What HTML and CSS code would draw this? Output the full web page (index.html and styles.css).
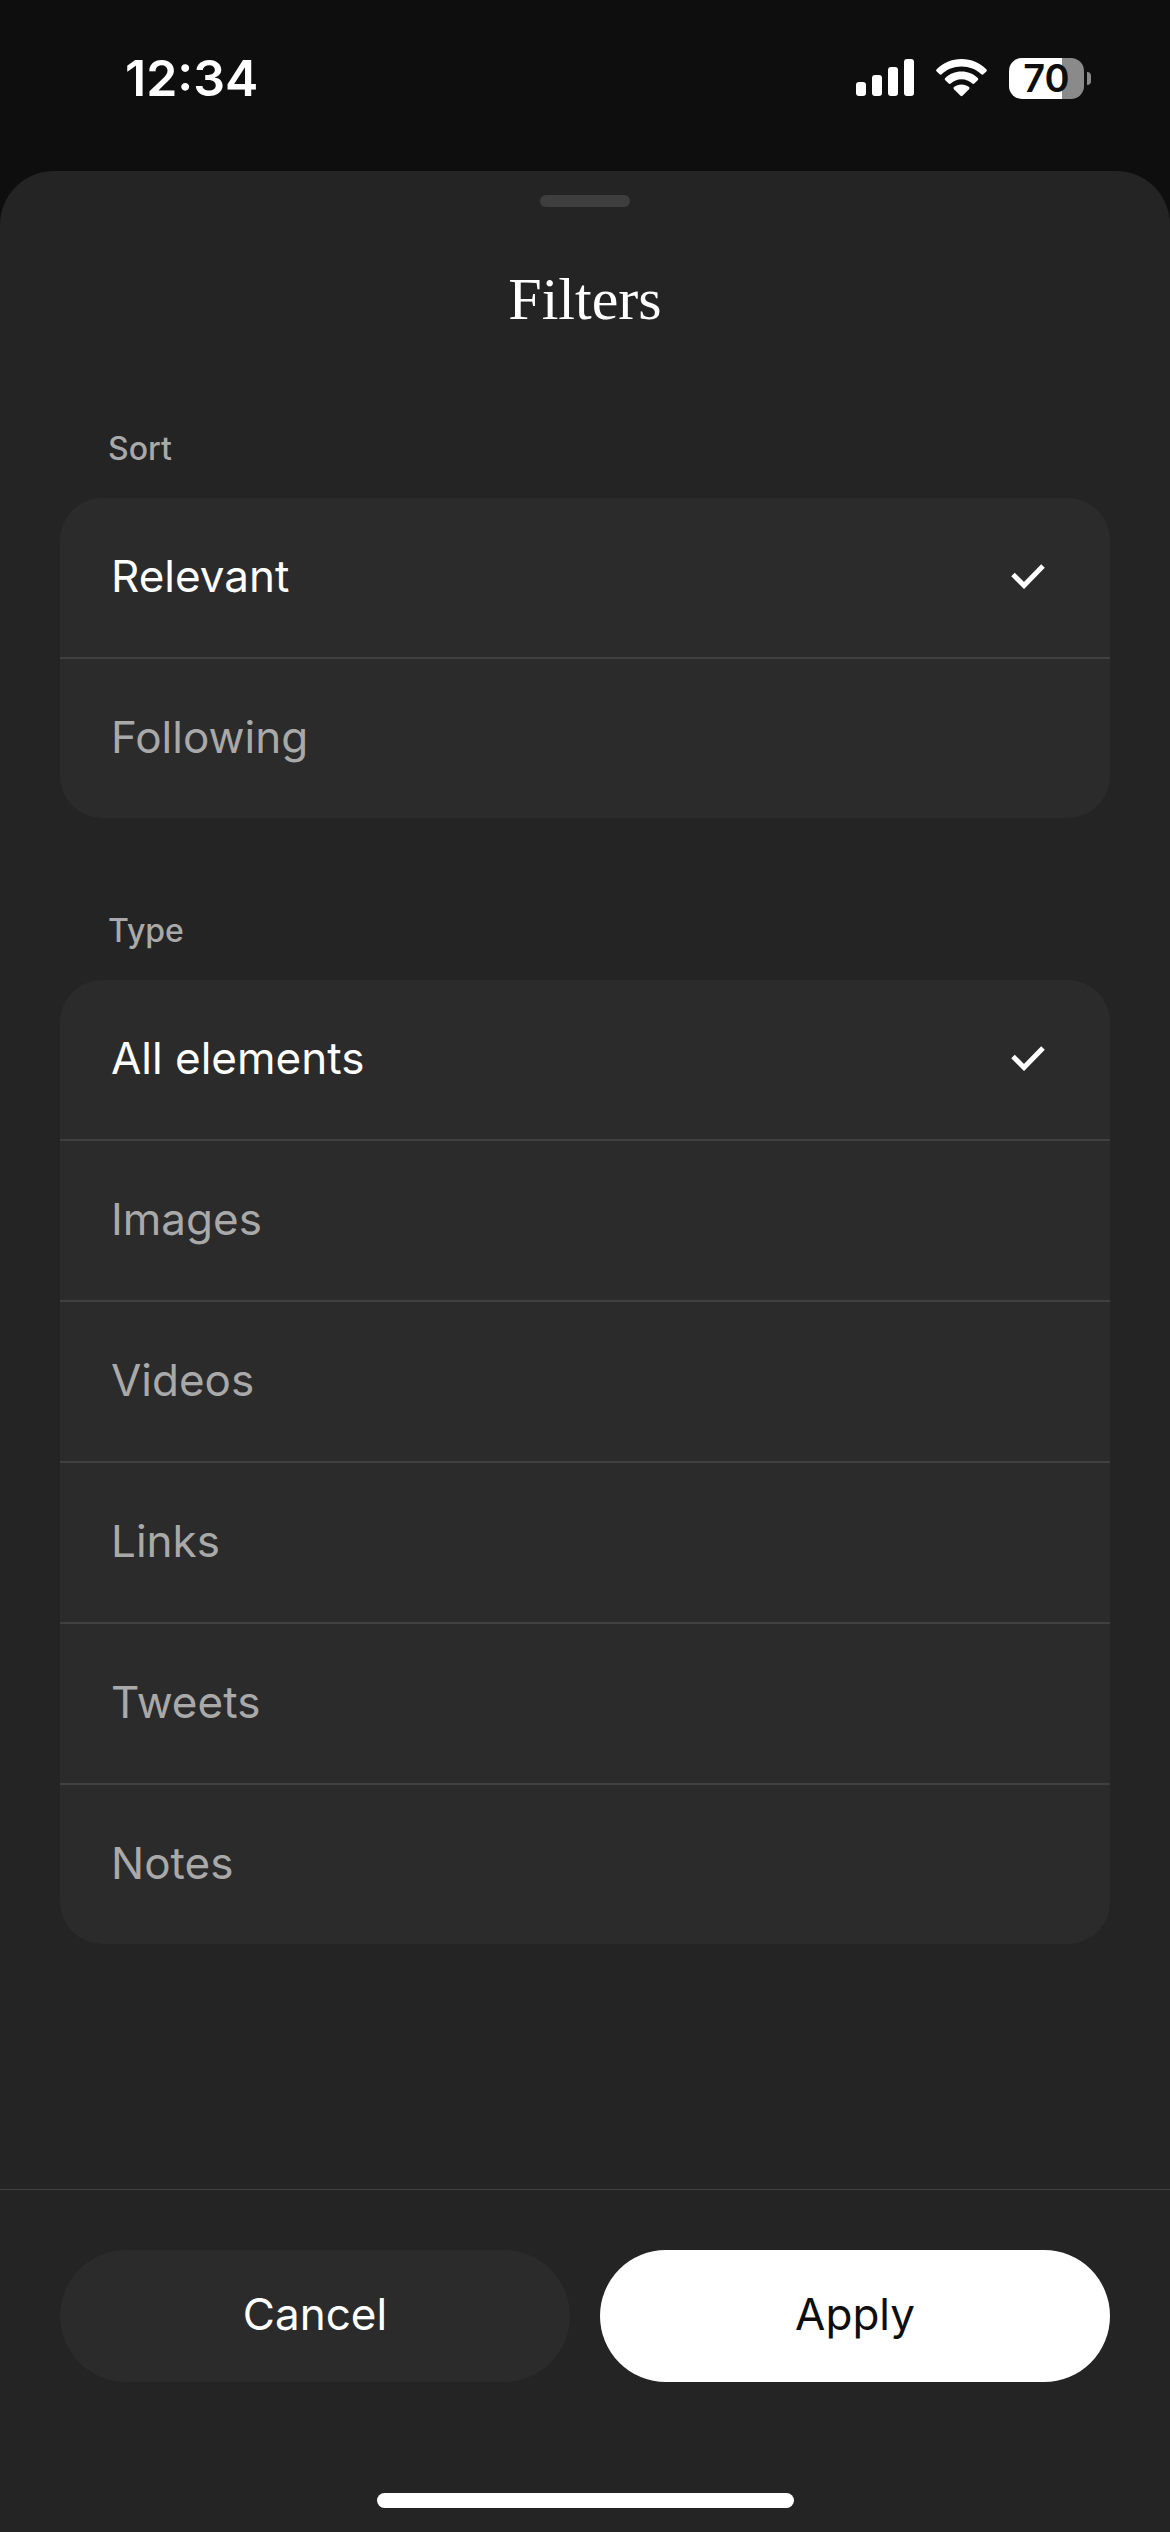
FILE: index.html
```
<!DOCTYPE html>
<html lang="en">
<head>
    <meta charset="UTF-8">
    <meta name="viewport" content="width=device-width, initial-scale=1.0">
    <title>Filters</title>
    <link rel="stylesheet" href="styles.css">
</head>
<body>
    <header class="status-bar">
        <time class="clock">12:34</time>
        <div class="status-icons">
            <svg class="signal" width="58" height="38" viewBox="0 0 58 38" fill="#fff">
                <rect x="0" y="23" width="10" height="14" rx="3"/>
                <rect x="16" y="16" width="10" height="21" rx="3"/>
                <rect x="32" y="8" width="10" height="29" rx="3"/>
                <rect x="48" y="0" width="10" height="37" rx="3"/>
            </svg>
            <svg class="wifi" width="51" height="38" viewBox="0 0 51 38" fill="#fff">
                <path d="M25.5 0C35.3 0 44 3.900 50.300 10.200c.7.700.7 1.500 0 2.200l-2.900 2.900c-.6.600-1.500.600-2.100 0C40.200 10.400 33.200 7.600 25.500 7.600S10.800 10.400 5.700 15.300c-.6.600-1.500.600-2.100 0L.7 12.400c-.7-.7-.7-1.500 0-2.200C7 3.900 15.700 0 25.500 0z"/>
                <path d="M25.500 12.600c6.300 0 12 2.400 16.200 6.400.7.700.7 1.500 0 2.200l-3.400 3.300c-.6.600-1.400.600-2.100 0-2.800-2.500-6.500-4.200-10.700-4.200s-7.900 1.700-10.700 4.200c-.7.600-1.500.600-2.100 0l-3.400-3.300c-.7-.7-.7-1.500 0-2.200 4.200-4 9.900-6.400 16.200-6.400z"/>
                <path d="M25.500 25.400c2.900 0 5.500 1 7.500 2.700.7.600.7 1.400 0 2.100l-6.500 6.500c-.6.600-1.400.600-2 0L18 30.200c-.7-.7-.7-1.500 0-2.100 2-1.700 4.600-2.700 7.500-2.700z"/>
            </svg>
            <div class="battery">
                <div class="battery-body">70</div>
                <div class="battery-cap"></div>
            </div>
        </div>
    </header>

    <main class="sheet">
        <div class="handle"></div>
        <h1 class="title">Filters</h1>

        <form class="filters" id="filters">
            <fieldset class="group">
                <legend class="group-label">Sort</legend>
                <div class="options">
                    <label class="option">
                        <input type="radio" name="sort" value="relevant" checked>
                        <span>Relevant</span>
                        <svg class="check" width="34" height="26" viewBox="0 0 34 26"><path d="M2 11.500l11 11L32 3"/></svg>
                    </label>
                    <label class="option">
                        <input type="radio" name="sort" value="following">
                        <span>Following</span>
                        <svg class="check" width="34" height="26" viewBox="0 0 34 26"><path d="M2 11.500l11 11L32 3"/></svg>
                    </label>
                </div>
            </fieldset>

            <fieldset class="group">
                <legend class="group-label">Type</legend>
                <div class="options">
                    <label class="option">
                        <input type="radio" name="type" value="all" checked>
                        <span>All elements</span>
                        <svg class="check" width="34" height="26" viewBox="0 0 34 26"><path d="M2 11.500l11 11L32 3"/></svg>
                    </label>
                    <label class="option">
                        <input type="radio" name="type" value="images">
                        <span>Images</span>
                        <svg class="check" width="34" height="26" viewBox="0 0 34 26"><path d="M2 11.500l11 11L32 3"/></svg>
                    </label>
                    <label class="option">
                        <input type="radio" name="type" value="videos">
                        <span>Videos</span>
                        <svg class="check" width="34" height="26" viewBox="0 0 34 26"><path d="M2 11.500l11 11L32 3"/></svg>
                    </label>
                    <label class="option">
                        <input type="radio" name="type" value="links">
                        <span>Links</span>
                        <svg class="check" width="34" height="26" viewBox="0 0 34 26"><path d="M2 11.500l11 11L32 3"/></svg>
                    </label>
                    <label class="option">
                        <input type="radio" name="type" value="tweets">
                        <span>Tweets</span>
                        <svg class="check" width="34" height="26" viewBox="0 0 34 26"><path d="M2 11.500l11 11L32 3"/></svg>
                    </label>
                    <label class="option">
                        <input type="radio" name="type" value="notes">
                        <span>Notes</span>
                        <svg class="check" width="34" height="26" viewBox="0 0 34 26"><path d="M2 11.500l11 11L32 3"/></svg>
                    </label>
                </div>
            </fieldset>
        </form>

        <footer class="footer">
            <div class="actions">
                <button class="btn" type="reset" form="filters">Cancel</button>
                <button class="btn btn-primary" type="submit" form="filters">Apply</button>
            </div>
            <div class="home-indicator"></div>
        </footer>
    </main>
</body>
</html>
```
FILE: styles.css
```
* {
    box-sizing: border-box;
}

body {
    margin: 0;
    min-height: 100vh;
    display: flex;
    flex-direction: column;
    background-color: #0e0e0e;
    color: #fff;
    font-family: Inter, "Liberation Sans", sans-serif;
}

/* Status bar */
.status-bar {
    display: flex;
    justify-content: space-between;
    align-items: center;
    padding: 48px 79px 63px 125px;
}

.clock {
    font-size: 50px;
    line-height: 60px;
    font-weight: 600;
}

.status-icons {
    display: flex;
    align-items: center;
    gap: 22px;
}

.battery {
    display: flex;
    align-items: center;
    gap: 3px;
}

.battery-body {
    width: 75px;
    border-radius: 13px;
    background: linear-gradient(to right, #fff 53px, #8a8a8a 53px);
    color: #0e0e0e;
    font-size: 38px;
    line-height: 41px;
    font-weight: 600;
    text-align: center;
}

.battery-cap {
    width: 4px;
    height: 13px;
    border-radius: 0 4px 4px 0;
    background-color: #8a8a8a;
}

/* Bottom sheet */
.sheet {
    flex: 1;
    display: flex;
    flex-direction: column;
    padding-top: 24px;
    border-radius: 54px 54px 0 0;
    background-color: #242424;
}

.handle {
    width: 90px;
    height: 12px;
    margin: 0 auto;
    border-radius: 6px;
    background-color: #3e3e3e;
}

.title {
    margin: 56px 0 94px;
    font-family: "Liberation Serif", serif;
    font-size: 60px;
    line-height: 72px;
    font-weight: 400;
    text-align: center;
}

.filters {
    display: flex;
    flex-direction: column;
    gap: 93px;
    padding: 0 60px 60px;
}

.group {
    margin: 0;
    padding: 0;
    border: 0;
    min-width: 0;
}

.group-label {
    padding: 0 48px 29px;
    color: #a9a9a9;
    font-size: 32px;
    line-height: 40px;
    font-weight: 500;
}

.options {
    border-radius: 42px;
    background-color: #2b2b2b;
    overflow: hidden;
}

.option {
    display: flex;
    align-items: center;
    justify-content: space-between;
    padding: 50px 65px 53px 51px;
    color: #a9a9a9;
    font-size: 44px;
    line-height: 56px;
    cursor: pointer;
}

.option + .option {
    border-top: 2px solid #404040;
}

.option input {
    position: absolute;
    opacity: 0;
}

.option:has(input:checked) {
    color: #fff;
}

.check {
    fill: none;
    stroke: #fff;
    stroke-width: 5;
    visibility: hidden;
}

.option input:checked ~ .check {
    visibility: visible;
}

/* Footer */
.footer {
    margin-top: auto;
    padding: 60px 60px 24px;
    border-top: 1px solid #404040;
}

.actions {
    display: flex;
    gap: 30px;
    margin-bottom: 111px;
}

.btn {
    flex: 1;
    padding: 36px 0 40px;
    border: 0;
    border-radius: 66px;
    background-color: #2b2b2b;
    color: #fff;
    font-family: inherit;
    font-size: 44px;
    line-height: 56px;
    cursor: pointer;
}

.btn-primary {
    background-color: #fff;
    color: #0e0e0e;
}

.home-indicator {
    width: 417px;
    height: 15px;
    margin: 0 auto;
    border-radius: 8px;
    background-color: #fff;
}
```
